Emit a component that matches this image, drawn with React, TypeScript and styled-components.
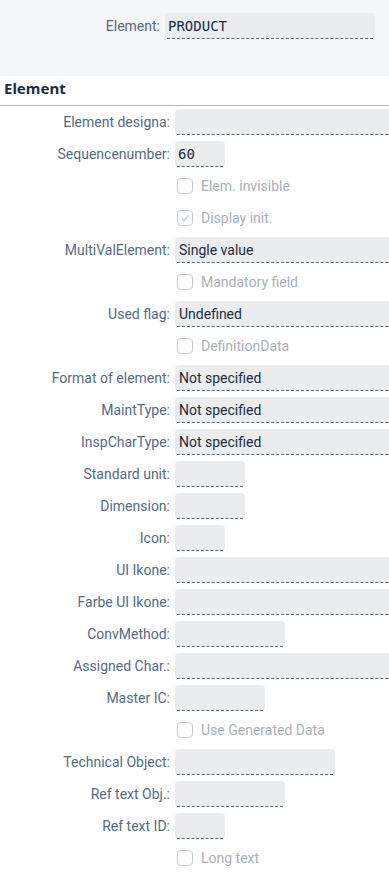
import React from "react";
import styled, { createGlobalStyle } from "styled-components";

const Global = createGlobalStyle`
  html, body { margin: 0; padding: 0; background: #ffffff; }
  body { font-family: Roboto, "Liberation Sans", sans-serif; overflow: hidden; width: 389px; }
`;

const Page = styled.div`
  width: 389px;
  overflow: hidden;
`;

const Header = styled.div`
  height: 76px;
  background: #f5f6f7;
  box-sizing: border-box;
  padding-top: 13px;
`;

const HeaderRow = styled.div`
  display: grid;
  grid-template-columns: 160px 210px;
  column-gap: 5px;
  align-items: center;
`;

const Label = styled.div`
  text-align: right;
  color: #556b82;
  font-size: 14px;
  white-space: nowrap;
  line-height: 26px;
`;

const Section = styled.div`
  height: 30px;
  box-sizing: border-box;
  border-bottom: 1px solid #a9b4be;
  padding-left: 4px;
  display: flex;
  align-items: center;
  padding-bottom: 5px;
  font-weight: 700;
  font-size: 15px;
  color: #1d2d3e;
  font-family: "Noto Sans", "Liberation Sans", sans-serif;
`;

const Form = styled.div`
  display: flex;
  flex-direction: column;
`;

const Row = styled.div`
  display: grid;
  grid-template-columns: 170px 1fr;
  column-gap: 5px;
  height: 32px;
  align-items: center;
`;

const widths: Record<string, string> = {
  xs: "50px",
  sm: "70px",
  md: "90px",
  lg: "110px",
  xl: "160px",
  full: "240px",
};

const Field = styled.div<{ $w: string; $mono?: boolean }>`
  width: ${(p) => widths[p.$w]};
  height: 26px;
  box-sizing: border-box;
  background: #eaecee;
  border-radius: 4px;
  position: relative;
  padding-left: ${(p) => (p.$mono ? "3px" : "4px")};
  display: flex;
  align-items: center;
  color: #1d2d3e;
  font-size: 14px;
  font-family: ${(p) =>
    p.$mono ? '"DejaVu Sans Mono", "Liberation Mono", monospace' : 'Roboto, "Liberation Sans", sans-serif'};
  &::after {
    content: "";
    position: absolute;
    left: 2px;
    right: 2px;
    bottom: 0;
    border-bottom: 1px dashed #556b82;
  }
`;

const CheckWrap = styled.div`
  grid-column: 2;
  display: flex;
  align-items: center;
  gap: 8px;
  padding-left: 2px;
  color: #a9b1b9;
  font-size: 14px;
`;

const Box = styled.span`
  width: 16px;
  height: 16px;
  box-sizing: border-box;
  border: 1px solid #c3cbd3;
  border-radius: 4px;
  display: inline-flex;
  align-items: center;
  justify-content: center;
`;

type Item =
  | { kind: "field"; label: string; w: string; value?: string; mono?: boolean }
  | { kind: "check"; label: string; checked?: boolean };

const items: Item[] = [
  { kind: "field", label: "Element designa:", w: "full" },
  { kind: "field", label: "Sequencenumber:", w: "xs", value: "60", mono: true },
  { kind: "check", label: "Elem. invisible" },
  { kind: "check", label: "Display init.", checked: true },
  { kind: "field", label: "MultiValElement:", w: "full", value: "Single value" },
  { kind: "check", label: "Mandatory field" },
  { kind: "field", label: "Used flag:", w: "full", value: "Undefined" },
  { kind: "check", label: "DefinitionData" },
  { kind: "field", label: "Format of element:", w: "full", value: "Not specified" },
  { kind: "field", label: "MaintType:", w: "full", value: "Not specified" },
  { kind: "field", label: "InspCharType:", w: "full", value: "Not specified" },
  { kind: "field", label: "Standard unit:", w: "sm" },
  { kind: "field", label: "Dimension:", w: "sm" },
  { kind: "field", label: "Icon:", w: "xs" },
  { kind: "field", label: "UI Ikone:", w: "full" },
  { kind: "field", label: "Farbe UI Ikone:", w: "full" },
  { kind: "field", label: "ConvMethod:", w: "lg" },
  { kind: "field", label: "Assigned Char.:", w: "full" },
  { kind: "field", label: "Master IC:", w: "md" },
  { kind: "check", label: "Use Generated Data" },
  { kind: "field", label: "Technical Object:", w: "xl" },
  { kind: "field", label: "Ref text Obj.:", w: "lg" },
  { kind: "field", label: "Ref text ID:", w: "xs" },
  { kind: "check", label: "Long text" },
];

export default function App() {
  return (
    <Page>
      <Global />
      <Header>
        <HeaderRow>
          <Label>Element:</Label>
          <Field $w="full" $mono style={{ width: "210px" }}>PRODUCT</Field>
        </HeaderRow>
      </Header>
      <Section>Element</Section>
      <Form>
        {items.map((it, i) =>
          it.kind === "field" ? (
            <Row key={i}>
              <Label>{it.label}</Label>
              <Field $w={it.w} $mono={it.mono}>{it.value}</Field>
            </Row>
          ) : (
            <Row key={i}>
              <CheckWrap>
                <Box>
                  {it.checked && (
                    <svg width="10" height="10" viewBox="0 0 10 10">
                      <path d="M1.5 5.2 L4 7.6 L8.6 2.2" fill="none" stroke="#a8c4e6" strokeWidth="1.1" />
                    </svg>
                  )}
                </Box>
                {it.label}
              </CheckWrap>
            </Row>
          )
        )}
      </Form>
    </Page>
  );
}
